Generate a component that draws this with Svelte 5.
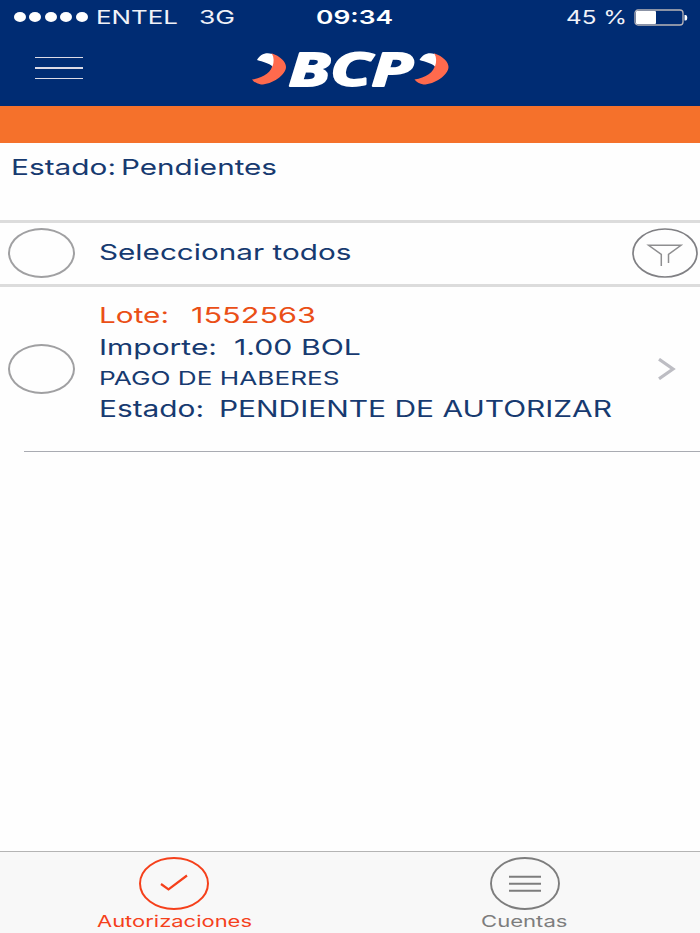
<script>
  // [text, advance width] pairs, one list per line of the batch
  const batch = [
    { kind: 'accent', size: 22, words: [['Lote:', 70], ['1552563', 125]], gap: 21.5 },
    { kind: 'navy', size: 22, words: [['Importe:', 118], ['1.00 BOL', 127]], gap: 17 },
    { kind: 'navy', size: 18.8, words: [['PAGO DE HABERES', 240.5]], gap: 0 },
    { kind: 'navy', size: 22.4, words: [['Estado:', 105], ['PENDIENTE DE AUTORIZAR', 393]], gap: 15 },
  ]

  const dots = [0, 1, 2, 3, 4]
  let selectAll = $state(false)
  let selected = $state(false)
  let tab = $state('autorizaciones')
</script>

<!-- wide lettering: the box is exactly as high as the capitals -->
{#snippet wide(text, width, size, weight = 400)}
  <svg class="wide" {width} height={size * 0.727} aria-label={text}>
    <text
      x="0"
      y={size * 0.727}
      font-size={size}
      font-weight={weight}
      textLength={width}
      lengthAdjust="spacingAndGlyphs">{text}</text>
  </svg>
{/snippet}

<div class="app">
  <header>
    <div class="status">
      <div class="carrier">
        <div class="signal">
          {#each dots as dot (dot)}<i></i>{/each}
        </div>
        {@render wide('ENTEL', 82, 19.2)}
        <span class="network">{@render wide('3G', 36, 19.2)}</span>
      </div>
      <div class="clock">{@render wide('09:34', 77, 19.2, 600)}</div>
      <div class="power">
        {@render wide('45 %', 61, 19.2)}
        <svg class="battery" width="54" height="17" viewBox="0 0 54 17">
          <rect x="1" y="1" width="48" height="15" rx="3" fill="none" stroke="#b9b5b8" stroke-width="1.3" />
          <rect x="2" y="2" width="20" height="13" rx="1" fill="#fff" />
          <path d="M50.5 6h1.2q1.6 0 1.6 2.7t-1.6 2.7h-1.2z" fill="#fff" />
        </svg>
      </div>
    </div>

    <div class="nav">
      <button class="menu" aria-label="Menú"><i></i><i></i><i></i></button>
      <svg class="logo" width="200" height="60" viewBox="250 38 200 60" aria-label="BCP">
        <defs>
          <g id="beak">
            <path d="M271.5 53.2C280 56 286 61.5 286 67C286 75 272 84.5 261 84.5Q255 83.5 252 79.5C263 78 272 72 272.500 64.5Z" fill="#ff6a4d" />
            <path d="M257 60C260 55 265 52 272 54C274 57 274.200 62 272.500 66.5C269 63 263 62 257 60Z" fill="#fff" />
          </g>
        </defs>
        <use href="#beak" />
        <text x="288.5" y="85.7" textLength="124" lengthAdjust="spacingAndGlyphs">BCP</text>
        <use href="#beak" x="162.5" />
      </svg>
    </div>
  </header>

  <div class="band"></div>

  <section class="state">
    {@render wide('Estado:', 105, 22)}
    {@render wide('Pendientes', 156, 22)}
  </section>

  <section class="all">
    <button class="check" class:on={selectAll} aria-label="Seleccionar todos" onclick={() => (selectAll = !selectAll)}></button>
    <div class="caption">{@render wide('Seleccionar todos', 252.5, 22)}</div>
    <button class="filter" aria-label="Filtrar">
      <svg width="66" height="50" viewBox="0 0 66 50" fill="none">
        <ellipse cx="33" cy="25" rx="32" ry="24" stroke="#808084" stroke-width="1.7" />
        <path d="M29.3 38V26.5L16.6 17.3H49L36.5 26.5V35" stroke="#8e8e90" stroke-width="1.5" />
      </svg>
    </button>
  </section>

  <section class="batch">
    <button class="check" class:on={selected} aria-label="Seleccionar lote" onclick={() => (selected = !selected)}></button>
    <div class="lines">
      {#each batch as line}
        <div class="line {line.kind}" style:gap="{line.gap}px">
          {#each line.words as [text, width]}
            {@render wide(text, width, line.size)}
          {/each}
        </div>
      {/each}
    </div>
    <svg class="chevron" width="18" height="22" viewBox="0 0 18 22" fill="none">
      <path d="M1 1.2L15 11L1 20.8" stroke="#bdbdc3" stroke-width="3.2" />
    </svg>
  </section>

  <footer>
    <button class="tab" class:active={tab === 'autorizaciones'} onclick={() => (tab = 'autorizaciones')}>
      <svg width="70" height="53" viewBox="0 0 70 53" fill="none" stroke="currentColor">
        <ellipse cx="35" cy="26.5" rx="34" ry="25.5" stroke-width="2" />
        <path d="M22 27L29.5 32.5L48 18.5" stroke-width="2.2" />
      </svg>
      {@render wide('Autorizaciones', 155, 16.4)}
    </button>
    <button class="tab" class:active={tab === 'cuentas'} onclick={() => (tab = 'cuentas')}>
      <svg width="70" height="53" viewBox="0 0 70 53" fill="none" stroke="currentColor">
        <ellipse cx="35" cy="26.5" rx="34" ry="25.5" stroke-width="1.9" />
        <path d="M19 19.7H51M19 26.7H51M19 33.7H51" stroke-width="2" />
      </svg>
      {@render wide('Cuentas', 86.5, 16.4)}
    </button>
  </footer>
</div>

<style>
  :global(body) { margin: 0; background: #fff; }

  .app {
    width: 700px;
    height: 933px;
    display: flex;
    flex-direction: column;
    overflow: hidden;
    background: #fefefe;
    color: #173a70;
    font-family: Inter, "Liberation Sans", sans-serif;
  }

  button {
    border: 0;
    padding: 0;
    background: none;
    color: inherit;
    font: inherit;
  }

  svg { display: block; flex: none; }
  .wide { overflow: visible; fill: currentColor; }

  header {
    height: 105.5px;
    box-sizing: border-box;
    padding-top: 8.5px;
    background: #002c73;
    color: #f0f2f8;
    flex: none;
  }

  .status {
    display: grid;
    grid-template-columns: 315.5px 1fr auto;
    align-items: center;
    height: 17px;
    padding-right: 12px;
  }

  .carrier { display: flex; align-items: center; padding-left: 14px; }
  .signal { display: flex; gap: 3.4px; margin-right: 8px; }
  .signal i { width: 12px; height: 10px; border-radius: 50%; background: #fff; }
  .network { margin-left: 21px; }
  .clock { color: #fff; }
  .power { display: flex; align-items: center; gap: 7px; }

  .nav {
    display: flex;
    align-items: center;
    padding: 12.5px 0 0 35px;
  }

  .menu {
    display: flex;
    flex-direction: column;
    gap: 9.3px;
    width: 48px;
    margin-right: 167px;
  }
  .menu i { height: 1.4px; background: #dcdbe6; }

  .logo { overflow: visible; }
  .logo text {
    font-family: "Open Sans", sans-serif;
    font-size: 47px;
    font-weight: 700;
    font-style: italic;
    fill: #fff;
    stroke: #fff;
    stroke-width: 2px;
    stroke-linejoin: round;
  }

  .band { height: 37.5px; background: #f5712b; flex: none; }

  .state {
    display: flex;
    gap: 5px;
    height: 61px;
    padding: 16px 0 0 11px;
    border-bottom: 3px solid #dcdcdc;
    flex: none;
  }

  .all {
    display: flex;
    align-items: center;
    height: 59px;
    padding: 0 2px 2px 8px;
    border-bottom: 3px solid #dcdcdc;
    flex: none;
  }
  .caption { flex: 1; padding-bottom: 1px; }

  .check {
    width: 67px;
    height: 50px;
    box-sizing: border-box;
    margin-right: 24px;
    border: 2px solid #a0a0a2;
    border-radius: 50%;
    flex: none;
  }
  .check.on { background: #f6712a; }

  .batch {
    display: flex;
    align-items: center;
    box-sizing: border-box;
    height: 165px;
    margin-left: 8px;
    padding: 0 24px 1.5px 0;
    flex: none;
    background: linear-gradient(#a9abb2, #a9abb2) 16px 100% / 100% 1.4px no-repeat;
  }
  .lines {
    flex: 1;
    align-self: flex-start;
    display: grid;
    grid-template-rows: 35.6px 32.7px 29.4px 32.6px;
  }
  .line { display: flex; align-items: flex-end; }
  .accent { color: #ea4f16; }
  .navy { color: #173a70; }

  footer {
    display: grid;
    grid-template-columns: 348px 353px;
    height: 81px;
    margin-top: auto;
    border-top: 1.4px solid #b4b4b4;
    background: #f8f8f8;
    flex: none;
  }
  .tab {
    display: flex;
    flex-direction: column;
    align-items: center;
    gap: 5px;
    padding-top: 5px;
    color: #7d7d7d;
  }
  .tab.active { color: #f5401b; }
</style>
